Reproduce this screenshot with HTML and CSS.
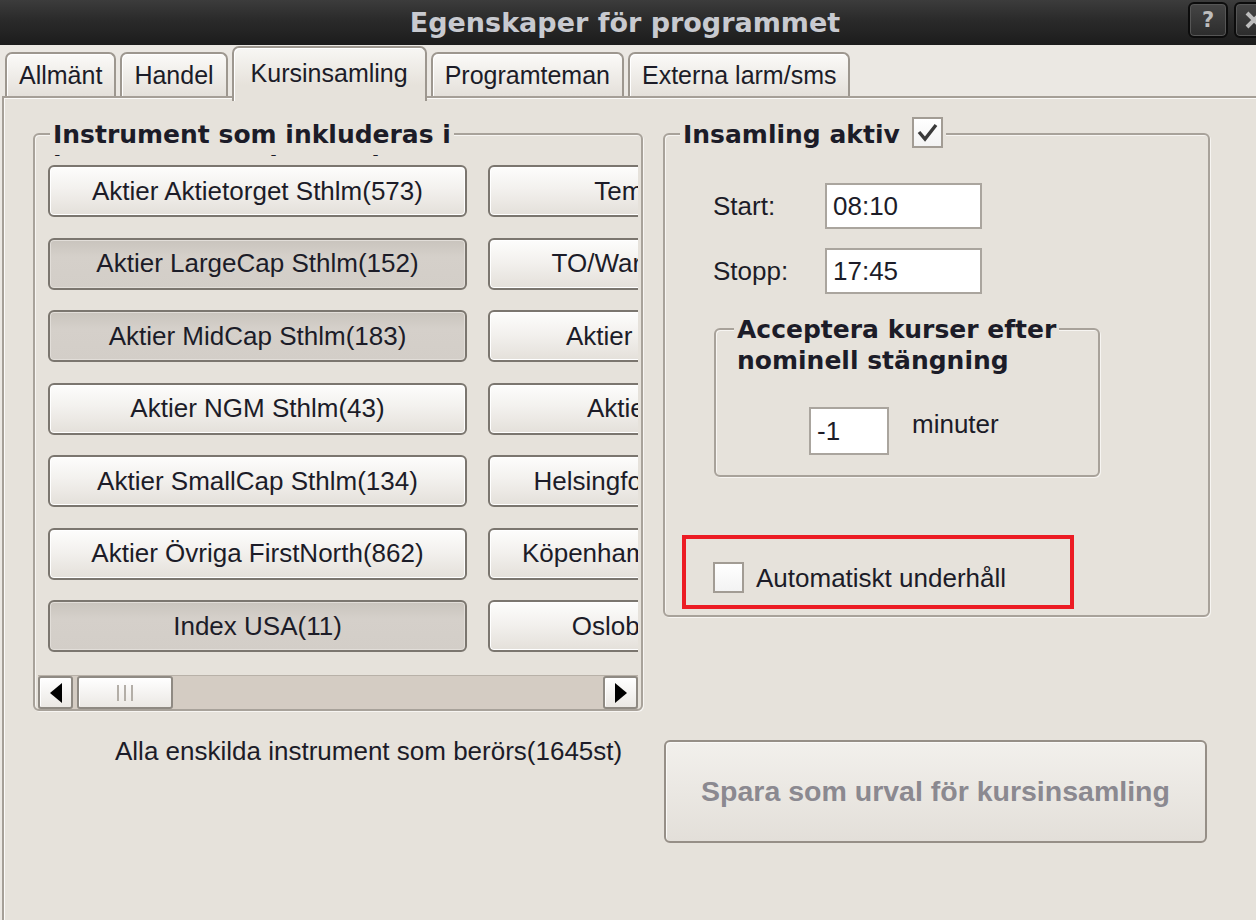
FILE: index.html
```html
<!DOCTYPE html>
<html lang="sv">
<head>
  <meta charset="UTF-8" />
  <title>Egenskaper för programmet</title>
  <link rel="stylesheet" href="styles.css">
</head>
<body>
  <div class="window">
    <div class="titlebar">
      <span class="caption">Egenskaper för programmet</span>
      <div class="caption-buttons">
        <span class="cap-btn">?</span>
        <span class="cap-btn">
          <svg width="30" height="30" viewBox="0 0 30 30"><path d="M8 8 L22 22 M22 8 L8 22" stroke="#bdbdbd" stroke-width="4"/></svg>
        </span>
      </div>
    </div>

    <div class="tabs">
      <div class="tab">Allmänt</div>
      <div class="tab">Handel</div>
      <div class="tab active">Kursinsamling</div>
      <div class="tab">Programteman</div>
      <div class="tab">Externa larm/sms</div>
    </div>

    <div class="panel">
      <div class="col-left">
        <div class="group">
          <div class="group-title">Instrument som inkluderas i</div>
          <div class="title-rest">i programmets insamning</div>
          <div class="scroll-area">
            <div class="inst-grid">
              <div class="inst-btn">Aktier Aktietorget Sthlm(573)</div>
              <div class="inst-btn">Tema Energi(125)</div>
              <div class="inst-btn on">Aktier LargeCap Sthlm(152)</div>
              <div class="inst-btn">TO/Warranter Sthlm(188)</div>
              <div class="inst-btn on">Aktier MidCap Sthlm(183)</div>
              <div class="inst-btn">Aktier NGM Nordic(61)</div>
              <div class="inst-btn">Aktier NGM Sthlm(43)</div>
              <div class="inst-btn">Aktier Spotlight(45)</div>
              <div class="inst-btn">Aktier SmallCap Sthlm(134)</div>
              <div class="inst-btn">Helsingforsbörsen Aktier(28)</div>
              <div class="inst-btn">Aktier Övriga FirstNorth(862)</div>
              <div class="inst-btn">Köpenhamnsbörsen Aktier(48)</div>
              <div class="inst-btn on">Index USA(11)</div>
              <div class="inst-btn">Oslobörsen Aktier(98)</div>
            </div>
          </div>
          <div class="hscroll">
            <span class="sb-btn">
              <svg width="12" height="20" viewBox="0 0 12 20"><polygon points="12,0 12,20 0,10" fill="#000"/></svg>
            </span>
            <span class="sb-thumb">
              <svg width="18" height="16" viewBox="0 0 18 16"><path d="M2 0 V16 M9 0 V16 M16 0 V16" stroke="#b3aea7" stroke-width="2"/></svg>
            </span>
            <span class="sb-btn right">
              <svg width="12" height="20" viewBox="0 0 12 20"><polygon points="0,0 0,20 12,10" fill="#000"/></svg>
            </span>
          </div>
        </div>
        <p class="summary">Alla enskilda instrument som berörs(1645st)</p>
      </div>

      <div class="col-right">
        <div class="group">
          <div class="group-title with-check">
            Insamling aktiv
            <span class="check">
              <svg width="27" height="27" viewBox="0 0 27 27"><polyline points="5,13 11,20 22,6" fill="none" stroke="#3a3a3a" stroke-width="3.4"/></svg>
            </span>
          </div>
          <div class="time-row">
            <label>Start:</label>
            <div class="textbox">08:10</div>
          </div>
          <div class="time-row">
            <label>Stopp:</label>
            <div class="textbox">17:45</div>
          </div>
          <div class="group late">
            <div class="group-title inner">Acceptera kurser efter<br>nominell stängning</div>
            <div class="late-row">
              <div class="textbox short">-1</div>
              <span class="unit">minuter</span>
            </div>
          </div>
          <div class="highlight">
            <span class="check"></span>
            <span>Automatiskt underhåll</span>
          </div>
        </div>
        <button class="save-btn" disabled>Spara som urval för kursinsamling</button>
      </div>
    </div>
  </div>
</body>
</html>
```

FILE: styles.css
```css
body {
  margin: 0;
  width: 1256px;
  height: 920px;
  overflow: hidden;
  background-color: #ebe8e3;
  font-family: "Liberation Sans", Arial, sans-serif;
  font-size: 26px;
  color: #1c1c28;
}

.window {
  height: 950px;
  display: flex;
  flex-direction: column;
}

.titlebar {
  position: relative;
  flex: none;
  height: 45px;
  background: linear-gradient(#3c3c3c, #2a2a2a 45%, #1c1c1c);
  text-align: center;
}

.caption {
  display: block;
  padding-right: 6px;
  font: bold 27px/45px "DejaVu Sans", sans-serif;
  color: #c8cad0;
}

.caption-buttons {
  position: absolute;
  top: 2px;
  left: 1188px;
  display: flex;
  gap: 6px;
}

.cap-btn {
  width: 36px;
  height: 32px;
  border: 2px solid #0c0c0c;
  border-radius: 6px;
  background: linear-gradient(#454545, #2c2c2c);
  box-shadow: inset 0 0 0 1px #565656;
  color: #bdbdbd;
  font: bold 21px/32px "DejaVu Sans", sans-serif;
  text-align: center;
}

.cap-btn svg {
  display: block;
  margin: 1px auto 0;
}

.tabs {
  position: relative;
  z-index: 1;
  flex: none;
  height: 51px;
  display: flex;
  align-items: flex-end;
  gap: 4px;
  padding-left: 5px;
}

.tab {
  height: 42px;
  padding: 0 12px;
  border: 2px solid #9d978f;
  border-bottom: 0;
  border-radius: 7px 7px 0 0;
  background: linear-gradient(#fbfaf8, #e4e0da);
  box-shadow: inset 1px 1px 0 #fff;
  font-size: 25px;
  line-height: 42px;
  white-space: nowrap;
}

.tab.active {
  height: 53px;
  margin-bottom: -5px;
  padding: 0 17px;
  background: linear-gradient(#f8f7f4, #e6e2db 70%);
  line-height: 50px;
}

.panel {
  flex: 1;
  margin: 0 -20px 0 2px;
  border: 2px solid #a59f97;
  background-color: #e6e2db;
  box-shadow: inset 1px 1px 0 #fbfaf8;
  display: flex;
  align-items: flex-start;
}

.col-left {
  width: 610px;
  margin: 35px 0 0 29px;
}

.col-right {
  width: 547px;
  margin: 35px 0 0 20px;
}

.group {
  border: 2px solid #a8a29a;
  border-radius: 6px;
  box-shadow: inset 1px 1px 0 #f7f5f2, 1px 1px 0 #f7f5f2;
}

.group-title {
  width: max-content;
  margin: -16px 0 0 15px;
  padding: 0 3px;
  background-color: #e6e2db;
  font: bold 25px/31px "DejaVu Sans", sans-serif;
  color: #1c1c28;
}

.group-title.with-check {
  display: flex;
  gap: 12px;
}

.group-title.with-check .check {
  margin-top: -2px;
}

.group-title.inner {
  margin-left: 18px;
}

.title-rest {
  height: 6px;
  overflow: hidden;
  margin: 0 0 1px 18px;
  font: bold 25px/31px "DejaVu Sans", sans-serif;
}

.scroll-area {
  height: 518px;
  margin: 0 3px;
  overflow: hidden;
}

.inst-grid {
  display: grid;
  grid-template-columns: 419px 419px;
  grid-auto-rows: 52px;
  row-gap: 20.5px;
  column-gap: 21px;
  width: max-content;
  padding: 8px 0 0 10px;
}

.inst-btn {
  display: flex;
  align-items: center;
  justify-content: center;
  white-space: nowrap;
  overflow: hidden;
  border: 2px solid #7b766f;
  border-radius: 6px;
  background: linear-gradient(#fdfdfc, #f3f1ee 45%, #e4e0da);
  box-shadow: inset 0 0 0 1px #fff;
}

.inst-btn.on {
  background: linear-gradient(#c9c4bd, #d5d0ca 35%, #d3cec8);
  box-shadow: inset 0 0 0 1px #e2ded9;
}

.hscroll {
  height: 34px;
  margin: 0 3px;
  display: flex;
  box-sizing: border-box;
  border-top: 1px solid #b8b1a8;
  background-color: #d4ccc3;
}

.sb-btn,
.sb-thumb {
  display: flex;
  align-items: center;
  justify-content: center;
  border: 2px solid #8f8a83;
  border-radius: 3px;
  background: linear-gradient(#fff, #ebe8e4);
  box-shadow: inset 1px 1px 0 #fff;
}

.sb-btn {
  width: 31px;
}

.sb-btn.right {
  margin-left: auto;
}

.sb-thumb {
  width: 92px;
  margin-left: 4px;
}

.summary {
  margin: 25px 0 0 82px;
  line-height: 30px;
}

.time-row {
  display: flex;
  align-items: center;
  margin: 33px 0 0 48px;
}

.time-row + .time-row {
  margin-top: 19px;
}

.time-row label {
  width: 112px;
}

.textbox {
  box-sizing: border-box;
  width: 157px;
  height: 46px;
  padding-left: 6px;
  border: 2px solid #aaa59e;
  background-color: #fff;
  line-height: 42px;
}

.textbox.short {
  width: 80px;
  height: 48px;
  line-height: 44px;
}

.late {
  box-sizing: border-box;
  width: 386px;
  margin: 34px 0 0 49px;
}

.late-row {
  display: flex;
  align-items: flex-start;
  margin-top: 31px;
  padding: 0 0 20px 93px;
}

.unit {
  margin: 2px 0 0 23px;
  line-height: 30px;
}

.highlight {
  box-sizing: border-box;
  width: 392px;
  height: 74px;
  margin: 58px 0 6px 17px;
  padding: 19px 0 8px 27px;
  border: 4px solid #ec1c24;
  display: flex;
  align-items: center;
  gap: 12px;
  line-height: 30px;
}

.check {
  flex: none;
  width: 27px;
  height: 27px;
  border: 2px solid #a29c94;
  background: linear-gradient(#fff, #f3f3f3);
}

.check svg {
  display: block;
}

.save-btn {
  display: block;
  width: 543px;
  height: 103px;
  margin: 123px 0 0 1px;
  padding: 0;
  border: 2px solid #968f87;
  border-radius: 6px;
  background: linear-gradient(#f2f0ec, #e3dfd9);
  box-shadow: inset 1px 1px 0 #faf9f7;
  font: bold 28.5px "Liberation Sans", Arial, sans-serif;
  color: #8b8990;
}
```
